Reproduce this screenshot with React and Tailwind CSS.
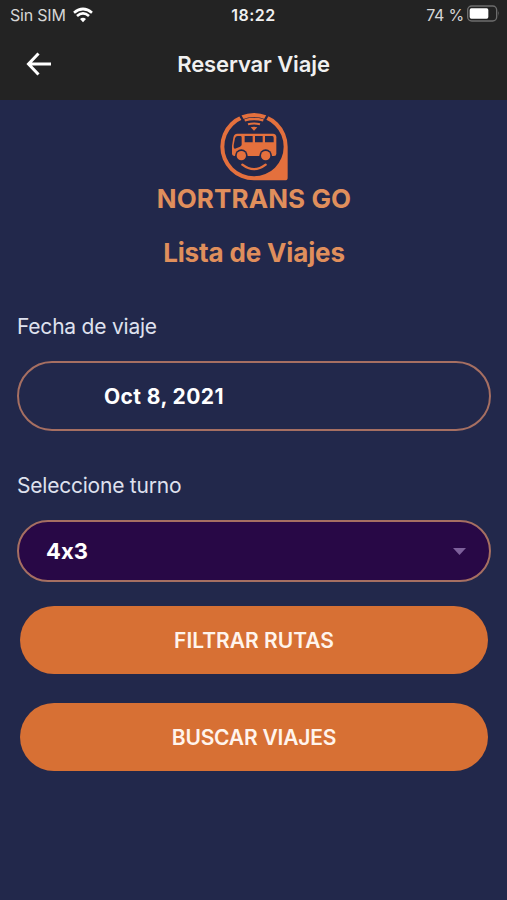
import React, { useState } from "react";

function StatusBar() {
  return (
    <div className="grid h-7 grid-cols-3 items-center pt-px text-[16px] text-[#d6d6d6]">
      <div className="flex items-center pl-2.5">
        <span className="w-[57px] whitespace-nowrap tracking-[-0.2px]">Sin SIM</span>
        <svg className="ml-1.5 h-4 w-5" viewBox="0 0 60 48" fill="none">
          <path d="M3 17 Q30 -5 57 17" stroke="#fff" strokeWidth="8" />
          <path d="M12 27 Q30 11 48 27" stroke="#fff" strokeWidth="8" />
          <path d="M21 36 Q30 28 39 36 L30 46Z" fill="#fff" />
        </svg>
      </div>
      <div className="text-center font-semibold tracking-[0.5px] text-[#f0f0f0]">18:22</div>
      <div className="flex items-center justify-end pr-[7px]">
        <span className="whitespace-nowrap tracking-[-0.2px]">74 %</span>
        <svg className="ml-[3px] -mt-0.5 h-[17px] w-[33px]" viewBox="0 0 99 51" fill="none">
          <rect x="2" y="3" width="87" height="45" rx="12" stroke="#6d6d6d" strokeWidth="4" />
          <rect x="8" y="10" width="56" height="31" rx="5" fill="#fff" />
          <path d="M93 18 Q98 25 93 33Z" fill="#6d6d6d" />
        </svg>
      </div>
    </div>
  );
}

function Logo() {
  return (
    <svg className="h-[70px] w-[72px]" viewBox="54 18 216 210" fill="none">
      <path
        fill="#e4703d"
        fillRule="evenodd"
        d="M162 24a101 101 0 0 1 101 101v93q0 8-8 8h-93a101 101 0 0 1 0-202ZM162 36a89 89 0 1 0 0 178a89 89 0 0 0 0-178Z"
      />
      {/* gaps that split the signal from the ring */}
      <path d="M114 20L129 46M209 20L194 46" stroke="#22284b" strokeWidth="7" />
      <path d="M134 46Q162 38 190 46" stroke="#e4703d" strokeWidth="7" />
      <path d="M144 58Q162 53 180 58" stroke="#e4703d" strokeWidth="6" />
      <path d="M152 67Q162 63 172 67L162 77Z" fill="#e4703d" />
      {/* bus */}
      <path
        fill="#e4703d"
        d="M112 86H219Q229 86 229 97V146Q229 153 222 153H104Q96 153 96 145V123L100 98Q102 86 112 86Z"
      />
      <path
        fill="#22284b"
        d="M113 93H121Q125 93 125 97V119Q125 122 120 125L105 131Q101 131 101 126V120L105 100Q107 93 113 93ZM134 93H158V112H134ZM165 93H188V112H165ZM195 93H217Q221 93 221 98V112H195Z"
      />
      <circle cx="124" cy="152" r="19" fill="#22284b" />
      <circle cx="197" cy="152" r="19" fill="#22284b" />
      <circle cx="124" cy="152" r="14" fill="#e4703d" />
      <circle cx="197" cy="152" r="14" fill="#e4703d" />
      <path d="M127 179Q162 206 197 179" stroke="#e4703d" strokeWidth="7" strokeLinecap="round" />
    </svg>
  );
}

function App() {
  const [date] = useState("Oct 8, 2021");
  const [shift] = useState("4x3");

  return (
    <div className="flex min-h-screen flex-col bg-[#22284b] font-['Inter','Liberation_Sans',sans-serif] text-white">
      <header className="h-[100px] bg-[#232323]">
        <StatusBar />
        <div className="grid h-[72px] grid-cols-[1fr_auto_1fr] items-center">
          <button className="pl-[26px]" aria-label="Volver">
            <svg className="h-6 w-[26px]" viewBox="0 0 26 24" fill="none">
              <path d="M12.5 1.5L2.5 12L12.5 22.5M2.5 12H25" stroke="#fff" strokeWidth="3" />
            </svg>
          </button>
          <h1 className="text-[22px] font-semibold leading-7 tracking-[-0.1px] text-[#f0f0f0]">
            Reservar Viaje
          </h1>
        </div>
      </header>

      <main className="flex flex-col pl-[17px] pr-4 pt-[11px]">
        <div className="flex flex-col items-center text-[#e08f5c]">
          <Logo />
          <div className="mt-0.5 text-[26px] font-bold leading-8 tracking-[0.1px]">NORTRANS GO</div>
          <h2 className="mt-[22px] text-[26px] font-bold leading-8 tracking-[-0.15px]">Lista de Viajes</h2>
        </div>

        <label className="mt-11 text-[21px] leading-7 tracking-[-0.22px] text-[#dfe1ee]">
          Fecha de viaje
        </label>
        <div className="mt-5 flex h-[70px] items-center rounded-full border-2 border-[#a66f62] pl-[85px] pt-0.5 text-[21px] font-bold tracking-[0.4px]">
          {date}
        </div>

        <label className="mt-[41px] text-[21px] leading-7 tracking-[-0.22px] text-[#dfe1ee]">
          Seleccione turno
        </label>
        <button className="mt-5 flex h-[62px] items-center justify-between rounded-full border-2 border-[#a66f62] bg-[#280846] pl-[27px] pr-[23px] text-[22px] font-bold [font-feature-settings:'calt'_0]">
          {shift}
          <svg className="h-[7px] w-[13px]" viewBox="0 0 13 7">
            <path d="M0 0H13L6.5 7Z" fill="#7d619b" />
          </svg>
        </button>

        <button className="mx-[3px] mt-6 h-[68px] rounded-full bg-[#d77034] pt-0.5 text-[21px] font-semibold text-[#fff4ec]">
          FILTRAR RUTAS
        </button>
        <button className="mx-[3px] mt-[29px] h-[68px] rounded-full bg-[#d77034] pt-0.5 text-[21px] font-semibold tracking-[-0.2px] text-[#fff4ec]">
          BUSCAR VIAJES
        </button>
      </main>
    </div>
  );
}

export default App;
